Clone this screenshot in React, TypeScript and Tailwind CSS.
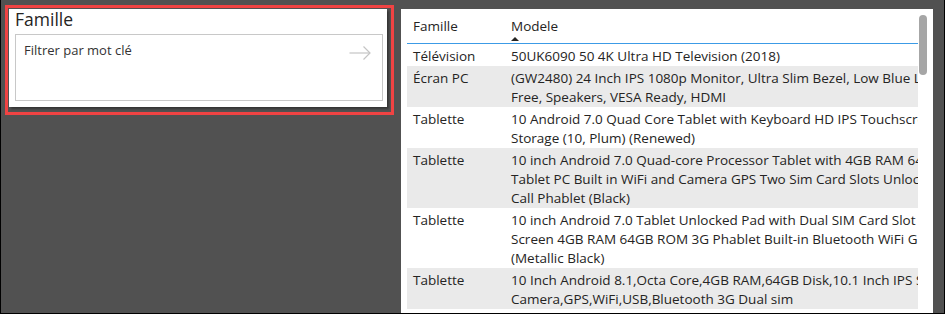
const rows: { famille: string; lines: string[]; gray: boolean }[] = [
  { famille: 'Télévision', lines: ['50UK6090 50 4K Ultra HD Television (2018)'], gray: false },
  {
    famille: 'Écran PC',
    lines: ['(GW2480) 24 Inch IPS 1080p Monitor, Ultra Slim Bezel, Low Blue Light Filter, Flicker', 'Free, Speakers, VESA Ready, HDMI'],
    gray: true,
  },
  {
    famille: 'Tablette',
    lines: ['10 Android 7.0 Quad Core Tablet with Keyboard HD IPS Touchscreen 2GB RAM 16GB', 'Storage (10, Plum) (Renewed)'],
    gray: false,
  },
  {
    famille: 'Tablette',
    lines: [
      '10 inch Android 7.0 Quad-core Processor Tablet with 4GB RAM 64GB ROM',
      'Tablet PC Built in WiFi and Camera GPS Two Sim Card Slots Unlocked Cell Phone',
      'Call Phablet (Black)',
    ],
    gray: true,
  },
  {
    famille: 'Tablette',
    lines: [
      '10 inch Android 7.0 Tablet Unlocked Pad with Dual SIM Card Slot 10.1 Inch IPS',
      'Screen 4GB RAM 64GB ROM 3G Phablet Built-in Bluetooth WiFi GPS',
      '(Metallic Black)',
    ],
    gray: false,
  },
  {
    famille: 'Tablette',
    lines: ['10 Inch Android 8.1,Octa Core,4GB RAM,64GB Disk,10.1 Inch IPS Screen,', 'Camera,GPS,WiFi,USB,Bluetooth 3G Dual sim'],
    gray: true,
  },
];

export default function App() {
  return (
    <div
      className="w-[945px] h-[314px] bg-[#515151] border-l border-r border-b border-black flex items-start overflow-hidden text-[#252423]"
      style={{ fontFamily: '"Open Sans", "Noto Sans", sans-serif' }}
    >
      {/* Slicer, highlighted */}
      <div className="ml-[4px] mt-[5px] w-[389px] h-[110px] border-[3px] border-[#f04343] shrink-0">
        <div className="ml-[1px] mt-[2px] w-[378px] h-[98px] bg-white shadow-[2px_2px_2px_rgba(0,0,0,0.35)] pl-[6px]">
          <div className="text-[17.5px] leading-[20px] h-[24px] -mt-[1px] text-[#252423]">Famille</div>
          <div className="mt-[1px] w-[368px] h-[67px] border border-[#c8c8c8] flex items-start justify-between pl-[8px] pr-[11px] pt-[5px]">
            <span className="text-[13px] leading-[20px] text-[#333]">Filtrer par mot clé</span>
            <svg width="22" height="14" viewBox="0 0 22 14" className="mt-[6px]" fill="none" stroke="#c4c4c4" strokeWidth="1.2">
              <path d="M0.5 7H21" />
              <path d="M14.5 0.5L21 7L14.5 13.5" />
            </svg>
          </div>
        </div>
      </div>

      {/* Table visual */}
      <div className="ml-[7px] mt-[9px] w-[532px] h-[304px] bg-white flex shrink-0 overflow-hidden">
        <div className="ml-[6px] w-[511px] overflow-hidden text-[13.5px] leading-[19px]">
          <div className="h-[35px] flex border-b border-[#3c9be6]">
            <div className="w-[98px] shrink-0 pl-[6px] pt-[7.5px]">Famille</div>
            <div className="pl-[6px] pt-[7.5px] flex flex-col">
              <span>Modele</span>
              <svg width="8" height="4" viewBox="0 0 8 4" className="mt-[1.5px]">
                <path d="M0 4L4 0L8 4Z" fill="#252423" />
              </svg>
            </div>
          </div>
          {rows.map((r, i) => (
            <div key={i} className={`flex pt-[3px] ${r.gray ? 'bg-[#eaeaea]' : 'bg-white'}`}>
              <div className="w-[98px] shrink-0 pl-[6px] whitespace-nowrap">{r.famille}</div>
              <div className="pl-[6px] whitespace-nowrap">
                {r.lines.map((l, j) => (
                  <div key={j}>{l}</div>
                ))}
              </div>
            </div>
          ))}
        </div>
        <div className="ml-[1px] mt-[6px] w-[8px] h-[60px] rounded-full bg-[#a6a6a6] shrink-0" />
      </div>
    </div>
  );
}
